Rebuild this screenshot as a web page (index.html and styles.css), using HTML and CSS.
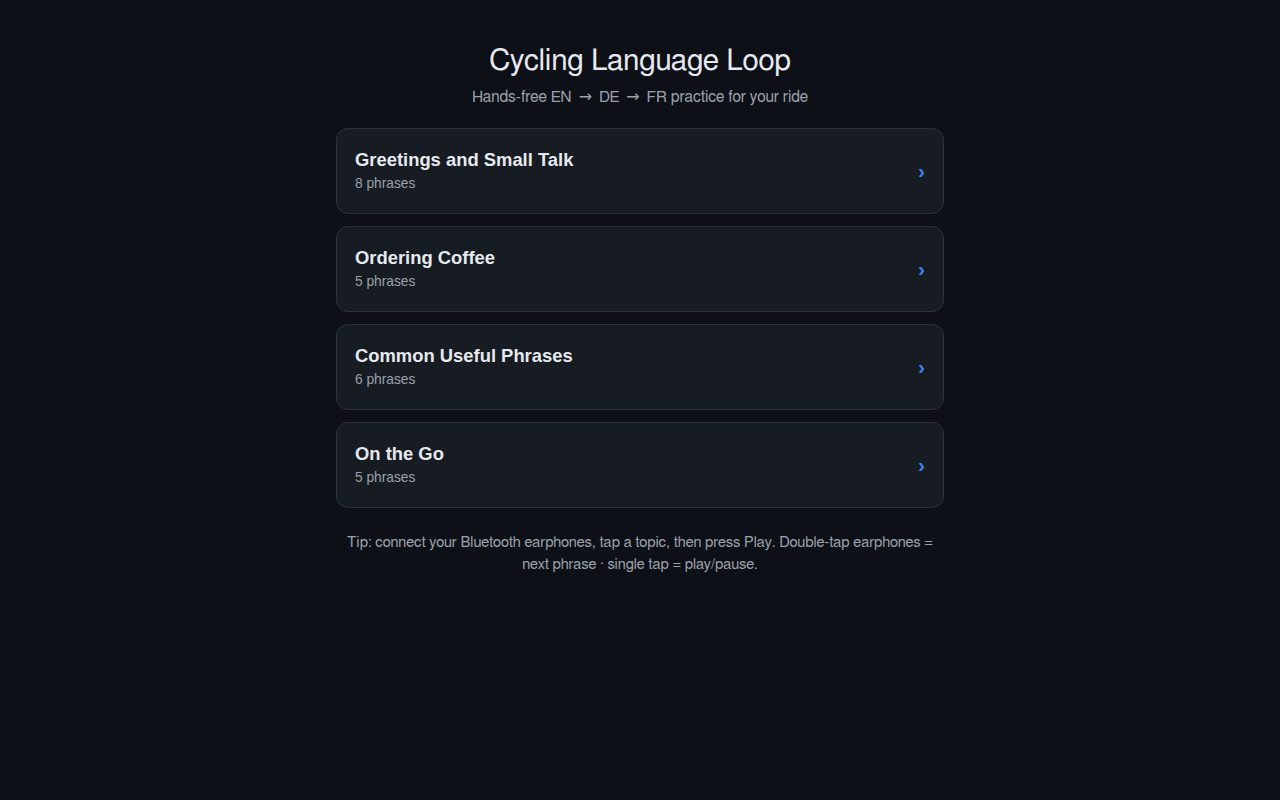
FILE: index.html
```html
<!DOCTYPE html>
<html lang="en">
<head>
    <meta charset="UTF-8">
    <meta name="viewport" content="width=device-width, initial-scale=1.0">
    <title>Cycling Language Loop</title>
    <link rel="stylesheet" href="styles.css">
</head>
<body>
    <main id="app">
        <header class="app-header">
            <h1>Cycling Language Loop</h1>
            <p class="subtitle">Hands-free EN <span class="arrow">→</span> DE <span class="arrow">→</span> FR practice for your ride</p>
        </header>

        <div id="topic-list">
            <button class="topic-card">
                <span class="topic-info">
                    <span class="topic-name">Greetings and Small Talk</span>
                    <span class="topic-count">8 phrases</span>
                </span>
                <span class="chevron">›</span>
            </button>
            <button class="topic-card">
                <span class="topic-info">
                    <span class="topic-name">Ordering Coffee</span>
                    <span class="topic-count">5 phrases</span>
                </span>
                <span class="chevron">›</span>
            </button>
            <button class="topic-card">
                <span class="topic-info">
                    <span class="topic-name">Common Useful Phrases</span>
                    <span class="topic-count">6 phrases</span>
                </span>
                <span class="chevron">›</span>
            </button>
            <button class="topic-card">
                <span class="topic-info">
                    <span class="topic-name">On the Go</span>
                    <span class="topic-count">5 phrases</span>
                </span>
                <span class="chevron">›</span>
            </button>
        </div>

        <p class="tip">Tip: connect your Bluetooth earphones, tap a topic, then press Play. Double-tap earphones = next phrase · single tap = play/pause.</p>
    </main>
</body>
</html>
```

FILE: styles.css
```css
:root {
    --bg-color: #0d1017;
    --card-bg: #171b22;
    --card-border: #2d323c;
    --text-color: #e6e9ee;
    --muted-color: #9aa1ab;
    --accent-color: #3b82f6;
}

body {
    margin: 0;
    background-color: var(--bg-color);
    color: var(--text-color);
    font-family: FreeSans, "Liberation Sans", sans-serif;
}

#app {
    max-width: 608px;
    margin: 0 auto;
    padding-top: 41px;
}

.app-header {
    text-align: center;
    margin-bottom: 20px;
}

.app-header h1 {
    font-size: 29.7px;
    font-weight: 400;
    margin: 0 0 7px;
    line-height: 40px;
}

.subtitle {
    color: var(--muted-color);
    font-size: 15.6px;
    margin: 0;
    line-height: 20px;
    height: 20px;
}

.arrow {
    font-family: "DejaVu Sans", sans-serif;
    font-size: 16px;
    line-height: 1;
    margin: 0 3px;
}

#topic-list {
    display: flex;
    flex-direction: column;
    gap: 12px;
}

.topic-card {
    display: flex;
    align-items: center;
    justify-content: space-between;
    width: 100%;
    height: 86px;
    padding: 0 18px;
    background-color: var(--card-bg);
    border: 1px solid var(--card-border);
    border-radius: 12px;
    color: var(--text-color);
    font-family: "Liberation Sans", Arial, sans-serif;
    text-align: left;
    cursor: pointer;
}

.topic-info {
    display: flex;
    flex-direction: column;
    gap: 5px;
    padding-bottom: 2px;
}

.topic-name {
    font-size: 18.4px;
    font-weight: 700;
}

.topic-count {
    font-size: 13.75px;
    color: var(--muted-color);
}

.chevron {
    color: var(--accent-color);
    font-size: 21px;
    font-weight: 700;
    line-height: 1;
    padding-bottom: 2px;
}

.tip {
    color: var(--muted-color);
    font-size: 14.8px;
    line-height: 22px;
    text-align: center;
    margin: 24px 0 0;
}
```
